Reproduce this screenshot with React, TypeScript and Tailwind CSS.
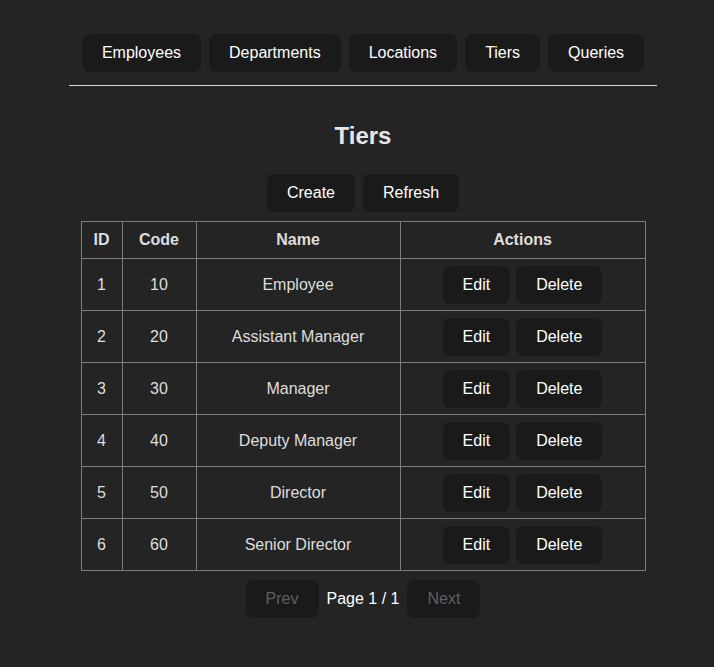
const navItems = ["Employees", "Departments", "Locations", "Tiers", "Queries"]

const tiers = [
  { id: 1, code: 10, name: "Employee" },
  { id: 2, code: 20, name: "Assistant Manager" },
  { id: 3, code: 30, name: "Manager" },
  { id: 4, code: 40, name: "Deputy Manager" },
  { id: 5, code: 50, name: "Director" },
  { id: 6, code: 60, name: "Senior Director" },
]

const btn =
  "h-[38px] px-[19px] rounded-lg bg-[#1a1a1a] text-white text-base leading-none border border-transparent"

export default function App() {
  return (
    <div
      className="min-h-[667px] bg-[#242424] text-[#dedede] pl-3"
      style={{ fontFamily: '"Liberation Sans", Arial, sans-serif' }}
    >
      <div className="w-[588px] mx-auto pt-[34px]">
        {/* Top navigation */}
        <nav className="flex justify-center gap-2">
          {navItems.map((item) => (
            <button key={item} className={btn}>
              {item}
            </button>
          ))}
        </nav>
        <hr className="mt-[13px] border-0 border-t border-[#d8d8d8]" />

        <h1 className="mt-[34px] h-8 leading-8 text-center text-2xl font-bold text-[#e6e6e6]">
          Tiers
        </h1>

        <div className="mt-[22px] flex justify-center gap-2">
          <button className={btn}>Create</button>
          <button className={btn}>Refresh</button>
        </div>

        {/* Table */}
        <table className="mt-[9px] mx-auto table-fixed border-collapse w-[564px] text-base">
          <colgroup>
            <col className="w-[41px]" />
            <col className="w-[74px]" />
            <col className="w-[204px]" />
            <col className="w-[245px]" />
          </colgroup>
          <thead>
            <tr className="h-[37px]">
              {["ID", "Code", "Name", "Actions"].map((h) => (
                <th key={h} className="border border-[#7c7c7c] font-bold text-center p-0">
                  {h}
                </th>
              ))}
            </tr>
          </thead>
          <tbody>
            {tiers.map((t) => (
              <tr key={t.id} className="h-[52px]">
                <td className="border border-[#7c7c7c] text-center p-0">{t.id}</td>
                <td className="border border-[#7c7c7c] text-center p-0">{t.code}</td>
                <td className="border border-[#7c7c7c] text-center p-0">{t.name}</td>
                <td className="border border-[#7c7c7c] p-0">
                  <div className="flex justify-center gap-[6px]">
                    <button className={btn}>Edit</button>
                    <button className={btn}>Delete</button>
                  </div>
                </td>
              </tr>
            ))}
          </tbody>
        </table>

        {/* Pagination */}
        <div className="mt-[9px] flex justify-center items-center gap-2">
          <button className={btn} style={{ color: "#5f5f5f" }} disabled>
            Prev
          </button>
          <span className="text-white">Page 1 / 1</span>
          <button className={btn} style={{ color: "#5f5f5f" }} disabled>
            Next
          </button>
        </div>
      </div>
    </div>
  )
}
